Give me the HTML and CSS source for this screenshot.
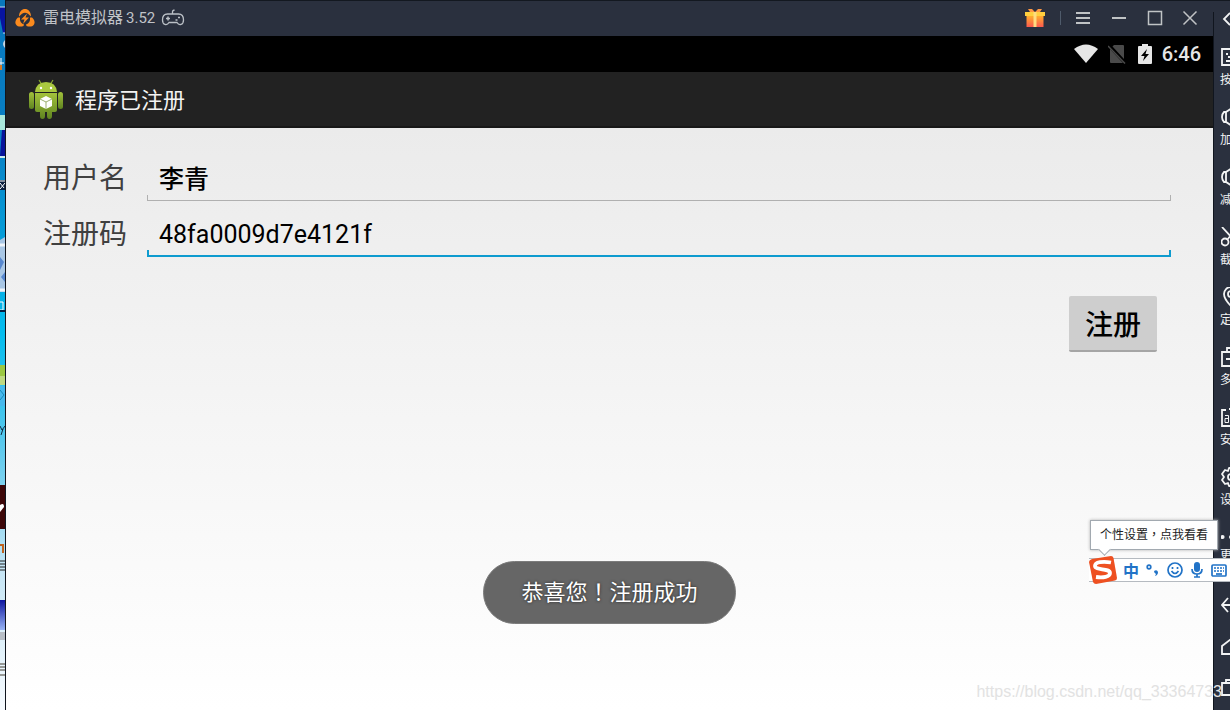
FILE: index.html
```
<!DOCTYPE html>
<html lang="zh-CN">

<head>
    <meta charset="utf-8">
    <title>程序已注册</title>
    <link rel="stylesheet" href="styles.css">
</head>

<body>
    <!-- strip of the desktop left of the window -->
    <svg class="desktop" viewBox="0 0 5 710" preserveAspectRatio="xMinYMin slice">
        <defs>
            <linearGradient id="sky" x1="0" y1="0" x2="0" y2="1">
                <stop offset="0" stop-color="#0878bd" />
                <stop offset="0.2" stop-color="#087fc4" />
                <stop offset="0.47" stop-color="#04bdef" />
                <stop offset="0.62" stop-color="#57c8ed" />
                <stop offset="0.8" stop-color="#c5e5f5" />
                <stop offset="1" stop-color="#f7fbff" />
            </linearGradient>
            <linearGradient id="blue" x1="0" y1="0" x2="0" y2="1">
                <stop offset="0" stop-color="#0d15a0" />
                <stop offset="1" stop-color="#98b4f4" />
            </linearGradient>
        </defs>
        <rect width="5" height="710" fill="url(#sky)" />
        <path d="M0 7h5v26H3L0 18z" fill="#0714a0" />
        <path d="M0 7h5M3 33h2" stroke="#c5e0ef" />
        <path d="M5 40q-4 4 0 8" fill="#c7d4df" />
        <path d="M0 63h4M1 58v12" stroke="#fff" />
        <path d="M0 65h2v5H0" fill="#d57925" />
        <path d="M0 115h5v15H0z" fill="#a9e8dc" />
        <path d="M2 130h3v26H0z" fill="#07139b" />
        <path d="M0 156h5v2H0z" fill="#c9ecf0" />
        <path d="M0 180h5v10H0z" fill="#0b203f" />
        <path d="M0 181h5M0 189l5-6M0 183l4 5" stroke="#fff" />
        <path d="M0 240l5-3v55H0z" fill="#a9c7e5" />
        <path d="M0 245h5M0 290h5" stroke="#eef4fa" stroke-width="3" />
        <path d="M0 257l4 5-4 8M5 272l-4 5 4 5" fill="#5888cf" />
        <path d="M0 302h3v8H0" fill="none" stroke="#fff" />
        <path d="M0 311h5" stroke="#052044" stroke-width="2" />
        <path d="M0 365h5v20H0z" fill="#9bc842" />
        <path d="M0 376h5v9H0z" fill="#bed982" />
        <path d="M0 386h5v20H0z" fill="#47b9ed" />
        <path d="M0 390l4 5-4 5" fill="none" stroke="#168bbb" />
        <path d="M0 426l2 4 3-4M3 429l-2 6" fill="none" stroke="#122b42" />
        <path d="M0 485h5v44H0z" fill="#3d0709" />
        <path d="M0 505q4-3 4 2l-4 5z" fill="#fff" />
        <path d="M0 545h3v8" fill="none" stroke="#bf621d" stroke-width="2" />
        <path d="M0 561h5M0 564h5M0 567h5M0 570h5" stroke="#222" />
        <path d="M0 600h5v30H0z" fill="url(#blue)" />
        <path d="M0 632h5v8H0z" fill="#b8bec6" />
        <path d="M0 664h5M0 667h5M0 670h5M0 675h5" stroke="#453d31" />
    </svg>

    <main class="window">
        <header class="titlebar">
            <svg class="logo" width="20" height="20" viewBox="0 0 20 20">
                <path d="M4 8.500C4 3.500 7 1 10 1s6 2.500 6 7.500l-3-2.700Q10 3.500 7 5.800z" fill="#fb8a1e" />
                <path d="M3 9.500C0 12 0 15 1 16.500c1.500 2.500 5 2.500 7.500 1.500L9 16.500C6 15.500 4.500 13 5 9.500z" fill="#fb8a1e" />
                <path d="M17 9.500c3 2.500 3 5.500 2 7-1.500 2.500-5 2.500-7.500 1.500L11 16.500c3-1 4.500-3.500 4-7z" fill="#fb8a1e" />
                <path d="M12 5.500L6 11.500h3.500L8 16l6-6.500h-3.500z" fill="#fb8a1e" />
            </svg>
            <span class="app-name">雷电模拟器</span>
            <span class="version">3.52</span>
            <svg class="gamepad" width="24" height="20" viewBox="0 0 24 20">
                <path d="M6.500 6h11C21 6 22.500 9 22.500 12c0 5-4.500 6-6.500 2.500H8C6 18 1.500 17 1.500 12c0-3 1.500-6 5-6zM11.500 6V3.500q0-1 2-1.500" fill="none" stroke="#bbc0c6" stroke-width="1.300" />
                <path d="M7 8.500v4M5 10.500h4M14.500 12h2M17 9.500h2" stroke="#bbc0c6" stroke-width="1.500" />
            </svg>
            <div class="window-tools">
                <button class="tool" aria-label="礼包">
                    <svg width="20" height="20" viewBox="0 0 20 20">
                        <defs>
                            <linearGradient id="gift" x1="0" y1="0" x2="0" y2="1">
                                <stop offset="0" stop-color="#ffad2c" />
                                <stop offset="1" stop-color="#fb594f" />
                            </linearGradient>
                        </defs>
                        <path d="M1.500 8h17v11h-17z" fill="url(#gift)" />
                        <path d="M10 4L7 1 3 1l2 3zM10 4l3-3h4l-2 3z" fill="#ff9846" />
                        <path d="M0 4h20v4H0z" fill="#ffcf3f" />
                        <path d="M8.500 4h3v15h-3z" fill="#ffdc80" />
                    </svg>
                </button>
                <span class="divider"></span>
                <button class="tool" aria-label="菜单">
                    <svg width="20" height="20" viewBox="0 0 20 20"><path d="M3 5h14M3 10h14M3 15h14" /></svg>
                </button>
                <button class="tool" aria-label="最小化">
                    <svg width="20" height="20" viewBox="0 0 20 20"><path d="M3 10h14" /></svg>
                </button>
                <button class="tool" aria-label="最大化">
                    <svg width="20" height="20" viewBox="0 0 20 20"><path d="M3.500 3.500h13v13h-13z" class="thin" /></svg>
                </button>
                <button class="tool" aria-label="关闭">
                    <svg width="18" height="20" viewBox="0 0 18 20"><path d="M2.500 3.500l13 13M15.500 3.500l-13 13" class="thin" /></svg>
                </button>
            </div>
        </header>

        <div class="statusbar">
            <svg width="24" height="20" viewBox="0 0 24 20"><path d="M0 5q12-9 24 0L12 19z" fill="#e6e6e6" /></svg>
            <svg width="20" height="20" viewBox="0 0 20 20">
                <path d="M6 1h9q1 0 1 1v13L4.500 2.500zM2 5l13 14H3q-1 0-1-1z" fill="#4a4a4a" />
                <path d="M0 2l17 17.500" stroke="#4a4a4a" stroke-width="1.500" />
            </svg>
            <svg width="14" height="22" viewBox="0 0 14 22">
                <path d="M1 3h3V1h6v2h3q1 0 1 1v16q0 1-1 1H1q-1 0-1-1V4q0-1 1-1z" fill="#e6e6e6" />
                <path d="M9 6l-6 7h3.500L5 18l6-7H7.500z" fill="#000" />
            </svg>
            <time class="clock">6:46</time>
        </div>

        <div class="actionbar">
            <svg width="36" height="42" viewBox="0 0 36 42">
                <defs>
                    <linearGradient id="robot" x1="0" y1="0" x2="0" y2="1">
                        <stop offset="0" stop-color="#a3c23c" />
                        <stop offset="1" stop-color="#5f8420" />
                    </linearGradient>
                </defs>
                <path d="M11 2l3 5M25 2l-3 5" stroke="#89aa31" stroke-width="1.200" />
                <path d="M7 14q1-10 11-10t11 10z" fill="#a9c83f" />
                <circle cx="13" cy="10" r="1.200" fill="#fff" />
                <circle cx="23" cy="10" r="1.200" fill="#fff" />
                <path d="M7 15h22v17q0 2-2 2h-3v4q0 3-2.500 3T19 38v-4h-2v4q0 3-2.500 3T12 38v-4H9q-2 0-2-2z" fill="url(#robot)" />
                <rect x="1" y="14" width="5" height="17" rx="2.500" fill="url(#robot)" />
                <rect x="30" y="14" width="5" height="17" rx="2.500" fill="url(#robot)" />
                <path d="M18 18l6 3v7l-6 3-6-3v-7z" fill="#fff" />
                <path d="M12 21l6 3 6-3M18 24v7" fill="none" stroke="#9caf73" />
            </svg>
            <h1 class="title">程序已注册</h1>
        </div>

        <form class="register">
            <label class="label" for="username">用户名</label>
            <input class="field name" id="username" type="text" value="李青">
            <label class="label" for="code">注册码</label>
            <input class="field active" id="code" type="text" value="48fa0009d7e4121f" spellcheck="false">
            <button class="submit" type="button">注册</button>
        </form>

        <div class="toast">恭喜您<span lang="zh-TW">！</span>注册成功</div>
    </main>

    <aside class="sidebar">
        <button class="collapse" aria-label="收起">
            <svg width="16" height="20" viewBox="0 0 16 20"><path d="M9 4l-6 6 6 6" /></svg>
        </button>
        <button class="side-item">
            <svg width="20" height="20" viewBox="0 0 20 20"><path d="M1 2h18v16H1zM5 7h2M10 7h2M7 10h2M5 14h9" /></svg>
            按
        </button>
        <button class="side-item">
            <svg width="20" height="20" viewBox="0 0 20 20"><path d="M5 5H3Q1 7 1 10t2 5h2l6 4V1L5 5v10" /></svg>
            加
        </button>
        <button class="side-item">
            <svg width="20" height="20" viewBox="0 0 20 20"><path d="M5 5H3Q1 7 1 10t2 5h2l6 4V1L5 5v10" /></svg>
            减
        </button>
        <button class="side-item">
            <svg width="20" height="20" viewBox="0 0 20 20"><path d="M1 0l12 13M17 0L6 13" /><circle cx="4" cy="15" r="3.500" /><circle cx="14" cy="15" r="3.500" /></svg>
            截
        </button>
        <button class="side-item">
            <svg width="20" height="20" viewBox="0 0 20 20"><path d="M10 19Q3 12 3 7a7 7 0 0 1 14 0q0 5-7 12z" /><circle cx="10" cy="7" r="3" /></svg>
            定
        </button>
        <button class="side-item">
            <svg width="20" height="20" viewBox="0 0 20 20"><path d="M6 5V1h13v14h-4M1 5h14v14H1zM5 12h6" /></svg>
            多
        </button>
        <button class="side-item">
            <svg width="20" height="20" viewBox="0 0 20 20"><path d="M5 3H1v16h18V3h-4M8 2h4" /><path class="thin" d="M4 8.500h3.500v7H4v-4h3.500M11 6v9.500h4v-5h-4" /></svg>
            安
        </button>
        <button class="side-item">
            <svg width="20" height="20" viewBox="0 0 20 20"><path d="M8 1h4l1 3 3-1 2 4-2 3 2 3-2 4-3-1-1 3H8l-1-3-3 1-3-4 2-3-2-3 3-4 3 1z" stroke-linejoin="round" /><circle cx="10" cy="10" r="3" /></svg>
            设
        </button>
        <button class="side-item more">
            <svg width="20" height="20" viewBox="0 0 20 20"><path d="M1.500 9h.1M10 9h.1M18 9h.1" class="dots" /></svg>
            更
        </button>
        <nav class="android-keys">
            <button class="key" aria-label="返回"><svg width="20" height="20" viewBox="0 0 20 20"><path d="M7 3L1 10l6 7M1 10h18" /></svg></button>
            <button class="key" aria-label="主页"><svg width="20" height="20" viewBox="0 0 20 20"><path d="M1 18v-8l9-7 9 7v8z" /></svg></button>
            <button class="key" aria-label="最近任务"><svg width="20" height="20" viewBox="0 0 20 20"><path d="M5 6V3h14v12h-4M1 6h14v12H1z" /></svg></button>
        </nav>
    </aside>

    <!-- input method bar -->
    <div class="ime">
        <div class="ime-tip">个性设置<span lang="zh-TW">，</span>点我看看</div>
        <div class="ime-bar">
            <svg class="sogou" width="28" height="28" viewBox="0 0 28 28">
                <path d="M3 3l19-3q2 0 2.500 2L28 22q0 2-2 2.500L7 28q-2 0-3-2L0 6q0-2 3-3z" fill="#ee5021" />
                <path d="M22 6.500C14 5 6 6 6 10c0 4.500 15 2 15 7 0 4-7 5-14 4" fill="none" stroke="#fff" stroke-width="3.800" />
            </svg>
            <span class="ime-mode">中</span>
            <svg width="16" height="16" viewBox="0 0 16 16"><circle cx="4" cy="5" r="1.800" /><path d="M9 9q3-2 4 1 0 3-3 4l1-2q-2-1-2-3z" fill="#2173c7" stroke="none" /></svg>
            <svg width="16" height="16" viewBox="0 0 16 16"><circle cx="8" cy="8" r="7" /><path d="M4.500 9q3.500 5 7 0M5.500 5v2M10.500 5v2" /></svg>
            <svg width="16" height="16" viewBox="0 0 16 16"><rect x="5" y="0" width="6" height="10" rx="3" fill="#2173c7" stroke="none" /><path d="M3 7q0 5 5 5t5-5M8 12v3M5 15h6" /></svg>
            <svg width="16" height="16" viewBox="0 0 16 16"><rect x="1" y="3" width="14" height="11" rx="1" /><path d="M3 6h10M3 9h10" stroke-dasharray="2 1" /><path d="M5 12h6" /></svg>
        </div>
    </div>

    <div class="watermark">https://blog.csdn.net/qq_33364733</div>
</body>

</html>
```
FILE: styles.css
```
* {
    box-sizing: border-box;
}

body {
    position: relative;
    display: flex;
    height: 100vh;
    margin: 0;
    overflow: hidden;
    font-family: Roboto, "Noto Sans CJK SC", sans-serif;
}

button {
    padding: 0;
    border: 0;
    background: none;
    font-family: inherit;
}

svg {
    display: block;
    flex: none;
}

.desktop {
    width: 5px;
    height: 100%;
}

.window {
    display: flex;
    flex: 1;
    flex-direction: column;
    min-width: 0;
    border-left: 1px solid #10151e;
    background: linear-gradient(#ebebeb 128px, #ffffff);
}

/* title bar */
.titlebar {
    display: flex;
    align-items: center;
    height: 36px;
    padding: 0 14px 0 9px;
    background: #2a303e;
    box-shadow: inset 0 1px #131820;
    color: #c0c3c8;
}

.app-name {
    margin: 0 3px 0 8px;
    font-size: 16px;
    line-height: 20px;
}

.version {
    margin-right: 6px;
    font-size: 15px;
    line-height: 20px;
}

.window-tools {
    display: flex;
    align-items: center;
    gap: 16px;
    margin-left: auto;
}

.tool path {
    stroke-width: 2;
}

.tool:not(:first-child) path {
    fill: none;
    stroke: #c0c3c5;
}

.tool .thin {
    stroke-width: 1.5;
}

.divider {
    width: 1px;
    height: 14px;
    margin: 0 -4px 0 -1px;
    background: #4f5b6b;
}

/* android status and action bars */
.statusbar {
    display: flex;
    align-items: center;
    justify-content: flex-end;
    gap: 10px;
    height: 36px;
    padding-right: 12px;
    background: #000000;
}

.clock {
    color: #e6e6e6;
    font-size: 20px;
    font-weight: 500;
}

.actionbar {
    display: flex;
    align-items: center;
    gap: 11px;
    height: 56px;
    padding-left: 22px;
    border-bottom: 2px solid #181818;
    background: #222222;
}

.title {
    margin: 0;
    padding-bottom: 2px;
    color: #f3f3f3;
    font-size: 22px;
    font-weight: 400;
}

/* form */
.register {
    display: grid;
    grid-template-columns: auto 1fr;
    column-gap: 20px;
    padding: 17px 42px 0 37px;
}

.label {
    color: #404040;
    font-size: 28px;
    line-height: 68px;
    height: 56px;
}

.field {
    width: 100%;
    min-width: 0;
    height: 56px;
    padding: 10px 12px 0;
    border: 0;
    outline: 0;
    background:
        linear-gradient(#b0b0b0, #b0b0b0) bottom / 100% 1px no-repeat,
        linear-gradient(#b0b0b0, #b0b0b0) left bottom / 1px 6px no-repeat,
        linear-gradient(#b0b0b0, #b0b0b0) right bottom / 1px 6px no-repeat;
    color: #000000;
    font-family: inherit;
    font-size: 25px;
}

.field.name {
    padding-top: 8px;
    font-weight: 500;
}

.field.active {
    background:
        linear-gradient(#0d9bcf, #0d9bcf) bottom / 100% 2px no-repeat,
        linear-gradient(#0d9bcf, #0d9bcf) left bottom / 2px 7px no-repeat,
        linear-gradient(#0d9bcf, #0d9bcf) right bottom / 2px 7px no-repeat;
}

.submit {
    grid-column: 2;
    justify-self: end;
    height: 56px;
    margin: 39px 14px 0 0;
    padding: 0 16px;
    border-bottom: 2px solid #a5a5a5;
    border-radius: 2px;
    background: #cecece;
    color: #000000;
    font-size: 28px;
    font-weight: 500;
}

.toast {
    align-self: center;
    margin: auto 0 86px;
    padding: 0 37px;
    border: 1px solid #7c7c7c;
    border-radius: 32px;
    background: #666666;
    color: #ffffff;
    font-size: 22px;
    line-height: 61px;
    text-shadow: 0 0 3px #222222;
}

[lang="zh-TW"] {
    font-family: "Noto Sans CJK TC", sans-serif;
    line-height: 1;
}

/* emulator side bar, it runs past the right edge of the screen */
.sidebar {
    width: 17px;
    overflow: hidden;
    background: linear-gradient(#10151e, #10151e) 0 12px / 1px 100% no-repeat #2a303e;
    box-shadow: inset 0 1px #131820;
}

.sidebar svg {
    fill: none;
    stroke: #f2f3f4;
    stroke-width: 1.8;
}

.sidebar .thin {
    stroke-width: 1;
}

.sidebar .dots {
    stroke-width: 4;
    stroke-linecap: round;
}

.collapse {
    display: flex;
    align-items: center;
    height: 37px;
    padding-left: 8px;
}

.side-item {
    display: flex;
    flex-direction: column;
    align-items: flex-start;
    justify-content: center;
    gap: 6px;
    height: 60px;
    padding-left: 7px;
    color: #f2f3f4;
    font-size: 12px;
    line-height: 14px;
}

.side-item svg {
    margin-left: 1px;
}

.side-item.more {
    gap: 0;
    height: 55px;
}

.android-keys {
    padding: 12px 0 0 8px;
}

.key {
    display: flex;
    align-items: center;
    height: 41px;
}

/* input method */
.ime {
    position: absolute;
    right: 0;
    bottom: 128px;
    width: 140px;
}

.ime-tip {
    position: relative;
    width: 128px;
    margin-bottom: 8px;
    border: 1px solid #a2a9b0;
    background: #ffffff;
    box-shadow: 0 0 3px #b0b0b0;
    color: #222222;
    font-size: 12px;
    line-height: 28px;
    text-align: center;
}

.ime-tip::after {
    content: "";
    position: absolute;
    left: 9px;
    bottom: -5px;
    width: 8px;
    height: 8px;
    border: solid #a2a9b0;
    border-width: 0 1px 1px 0;
    background: #ffffff;
    transform: rotate(45deg);
}

.ime-bar {
    display: flex;
    align-items: center;
    gap: 6px;
    height: 24px;
    margin-left: -1px;
    border: solid #b5bac0;
    border-width: 1px 0;
    background: #ffffff;
}

.ime-bar svg {
    fill: none;
    stroke: #2173c7;
    stroke-width: 1.7;
}

.ime-bar .sogou {
    stroke: none;
}

.ime-mode {
    color: #2173c7;
    font-size: 16px;
    font-weight: 700;
}

.watermark {
    position: absolute;
    right: 8px;
    bottom: 9px;
    color: #e2e2e2;
    font-family: "Liberation Sans", sans-serif;
    font-size: 16px;
}
```
